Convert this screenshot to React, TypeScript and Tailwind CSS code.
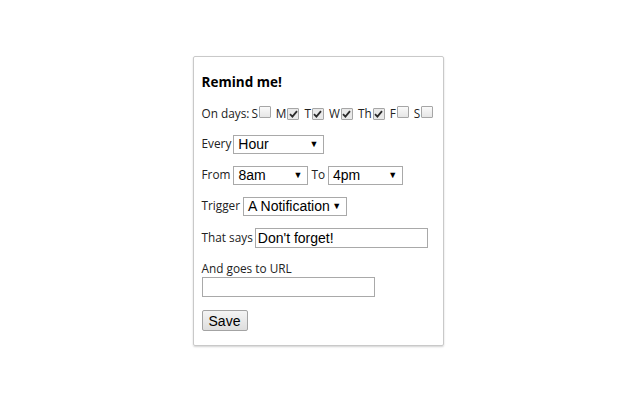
/**
 * Reminder popup
 *
 * Small settings card: which days, how often, what to show
 */

const days = [
  { label: 'S', checked: false },
  { label: 'M', checked: true },
  { label: 'T', checked: true },
  { label: 'W', checked: true },
  { label: 'Th', checked: true },
  { label: 'F', checked: false },
  { label: 'S', checked: false },
];

function Box({ checked }: { checked: boolean }) {
  return (
    <span
      className={
        'inline-flex items-center justify-center w-[12px] h-[12px] border border-[#a6a6a6] rounded-[1px] ' +
        (checked ? 'bg-[#e9e9e9]' : 'bg-gradient-to-b from-[#fafafa] to-[#e6e6e6]')
      }
    >
      {checked && (
        <svg width="9" height="8" viewBox="0 0 9 8">
          <path d="M1 4.2 L3.4 6.6 L8 1.2" fill="none" stroke="#2b2b2b" strokeWidth="1.8" />
        </svg>
      )}
    </span>
  );
}

function FakeSelect({ value, width }: { value: string; width: string }) {
  return (
    <div
      className={
        'shrink-0 flex items-center justify-between h-[19px] border border-[#a9a9a9] bg-white pl-[4px] pr-[5px] text-[14px] text-black font-["Liberation_Sans",Arial,sans-serif] ' +
        width
      }
    >
      <span>{value}</span>
      <span className="text-[9px] leading-none">▼</span>
    </div>
  );
}

export default function App() {
  return (
    <div className="w-[640px] h-[400px] bg-white font-['Open_Sans',sans-serif] text-[11.8px] text-[#222] whitespace-nowrap">
      <div className="flex justify-center pt-[56px]">
        <div className="w-[251px] ml-[-4px] border border-[#c9c9c9] rounded-[2px] shadow-[0_1px_2px_rgba(0,0,0,0.18)] pt-[16px] pb-[14px] pl-[8px] pr-[8px]">
          <div className="h-[18px] flex items-center text-[13.5px] font-bold text-black">Remind me!</div>

          <div className="mt-[13px] h-[20px] flex items-center">
            <span className="shrink-0">On days:</span>
            {days.map((d, i) => (
              <span key={i} className={'flex items-center ' + (i === 0 ? 'ml-[2px]' : 'ml-[5px]')}>
                <span>{d.label}</span>
                <span className="ml-[1px]">
                  <Box checked={d.checked} />
                </span>
              </span>
            ))}
          </div>

          <div className="mt-[10px] h-[20px] flex items-center gap-[2px]">
            <span>Every</span>
            <FakeSelect value="Hour" width="w-[91px]" />
          </div>

          <div className="mt-[11px] h-[20px] flex items-center gap-[3px]">
            <span>From</span>
            <FakeSelect value="8am" width="w-[75px]" />
            <span>To</span>
            <FakeSelect value="4pm" width="w-[75px]" />
          </div>

          <div className="mt-[11px] h-[20px] flex items-center gap-[3px]">
            <span>Trigger</span>
            <FakeSelect value="A Notification" width="w-[104px]" />
          </div>

          <div className="mt-[12px] h-[20px] flex items-center gap-[2px]">
            <span>That says</span>
            <input
              readOnly
              value="Don't forget!"
              className="w-[173px] h-[20px] border border-[#a9a9a9] px-[2px] text-[14px] text-black font-['Liberation_Sans',Arial,sans-serif] outline-none"
            />
          </div>

          <div className="mt-[13px] h-[16px] flex items-center">And goes to URL</div>
          <input
            readOnly
            value=""
            className="block w-[173px] h-[20px] border border-[#a9a9a9] px-[2px] text-[14px] font-['Liberation_Sans',Arial,sans-serif] outline-none"
          />

          <button className="mt-[13px] block w-[46px] h-[21px] border border-[#a3a3a3] rounded-[2px] bg-gradient-to-b from-[#f4f4f4] to-[#dedede] text-[14px] text-black font-['Liberation_Sans',Arial,sans-serif] leading-none">
            Save
          </button>
        </div>
      </div>
    </div>
  );
}
